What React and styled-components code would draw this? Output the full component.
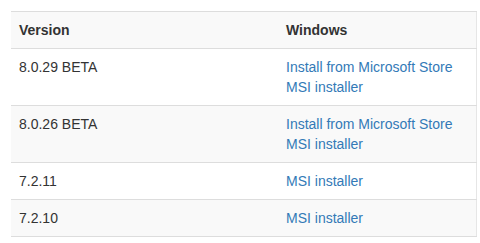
import React from "react";
import styled, { createGlobalStyle } from "styled-components";

const Global = createGlobalStyle`
  html, body { margin: 0; padding: 0; background: #fff; }
  body {
    font-family: "Liberation Sans", Arial, Helvetica, sans-serif;
    font-size: 14px;
    line-height: 20px;
    color: #333;
  }
`;

const Page = styled.div`
  padding: 11px 3px 0 11px;
`;

const Table = styled.table`
  width: 466px;
  border-collapse: collapse;
  border-spacing: 0;
  border-bottom: 1px solid #ddd;
  border-right: 1px solid #e6e6e6;
`;

const Row = styled.tr`
  background: ${(p) => (p.$striped ? "#f9f9f9" : "#fff")};
`;

const HeadCell = styled.th`
  text-align: left;
  font-weight: bold;
  padding: 8px;
  border-top: 1px solid #ddd;
  vertical-align: top;
  width: ${(p) => p.$w || "auto"};
`;

const Cell = styled.td`
  padding: 8px;
  border-top: 1px solid #ddd;
  vertical-align: top;
`;

const Link = styled.a`
  display: block;
  color: #337ab7;
  text-decoration: none;
`;

const rows = [
  { v: "8.0.29 BETA", links: ["Install from Microsoft Store", "MSI installer"] },
  { v: "8.0.26 BETA", links: ["Install from Microsoft Store", "MSI installer"] },
  { v: "7.2.11", links: ["MSI installer"] },
  { v: "7.2.10", links: ["MSI installer"] },
];

export default function App() {
  return (
    <Page>
      <Global />
      <Table>
        <thead>
          <Row $striped>
            <HeadCell $w="251px">Version</HeadCell>
            <HeadCell>Windows</HeadCell>
          </Row>
        </thead>
        <tbody>
          {rows.map((r, i) => (
            <Row key={i} $striped={i % 2 === 1}>
              <Cell>{r.v}</Cell>
              <Cell>
                {r.links.map((l, j) => (
                  <Link key={j} href="#">{l}</Link>
                ))}
              </Cell>
            </Row>
          ))}
        </tbody>
      </Table>
    </Page>
  );
}
